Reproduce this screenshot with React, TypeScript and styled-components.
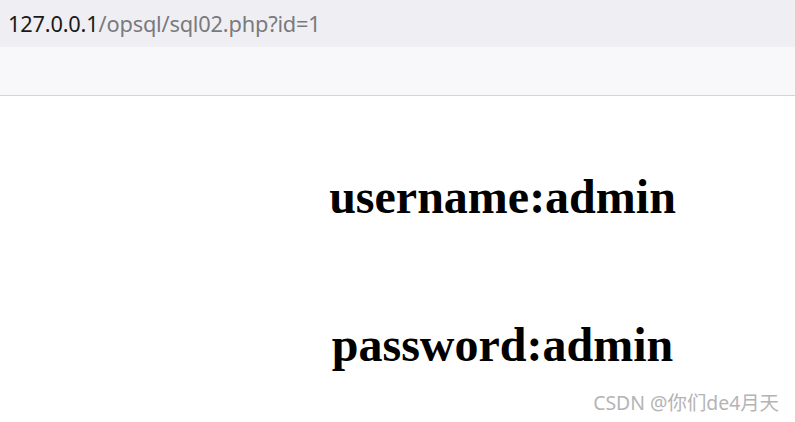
import React from "react";
import styled, { createGlobalStyle } from "styled-components";

const GlobalStyle = createGlobalStyle`
  html, body {
    margin: 0;
    padding: 0;
    background: #ffffff;
  }
`;

const Page = styled.div`
  width: 795px;
  height: 422px;
  position: relative;
  overflow: hidden;
  background: #ffffff;
`;

const AddressBar = styled.div`
  height: 47px;
  background: #efeff3;
  display: flex;
  align-items: center;
  padding-left: 8px;
  font-family: "Noto Sans", "Open Sans", sans-serif;
  font-size: 21.8px;
  letter-spacing: -0.2px;
`;

const Host = styled.span`
  color: #1a1a1a;
`;

const Path = styled.span`
  color: #7a7a7e;
`;

const ToolStrip = styled.div`
  height: 48px;
  background: #f8f8fa;
  border-bottom: 1px solid #d4d4d6;
`;

const Content = styled.div`
  display: flex;
  flex-direction: column;
  align-items: center;
  padding-left: 210px;
  padding-top: 69px;
  gap: 85px;
`;

const Line = styled.h1`
  margin: 0;
  font-family: "Liberation Serif", "Times New Roman", serif;
  font-weight: bold;
  font-size: 48px;
  line-height: 63px;
  color: #000000;
`;

const Watermark = styled.div`
  position: absolute;
  right: 16px;
  bottom: 6px;
  font-family: "Noto Sans", "Noto Sans CJK SC", sans-serif;
  font-size: 19.4px;
  color: #b4b4b4;
`;

export default function App() {
  return (
    <Page>
      <GlobalStyle />
      <AddressBar>
        <Host>127.0.0.1</Host>
        <Path>/opsql/sql02.php?id=1</Path>
      </AddressBar>
      <ToolStrip />
      <Content>
        <Line>username:admin</Line>
        <Line>password:admin</Line>
      </Content>
      <Watermark>CSDN @你们de4月天</Watermark>
    </Page>
  );
}
